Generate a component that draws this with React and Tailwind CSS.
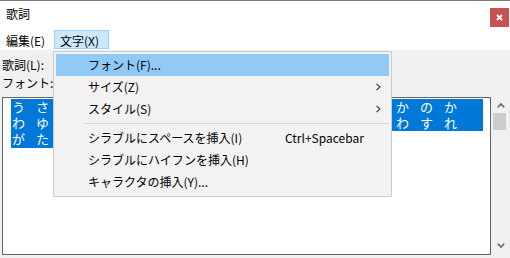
// Lyrics dialog with the 文字 menu open
// cells hidden under the open menu are left blank
const row1 = ['う', 'さ', '', '', '', '', '', '', '', '', '', '', '', '', '', '', 'か', 'の', 'か'];
const row2 = ['わ', 'ゆ', '', '', '', '', '', '', '', '', '', '', '', '', '', '', 'わ', 'す', 'れ'];
const row3 = ['が', 'た', '', '', '', '', ''];

const menuItems = [
  { label: 'フォント(F)...', active: true },
  { label: 'サイズ(Z)', sub: true },
  { label: 'スタイル(S)', sub: true },
  { sep: true },
  { label: 'シラブルにスペースを挿入(I)', shortcut: 'Ctrl+Spacebar' },
  { label: 'シラブルにハイフンを挿入(H)' },
  { label: 'キャラクタの挿入(Y)...' },
];

function LyricRow ({ chars, h, tail }) {
  return (
    <div className={`flex ${h}`}>
      <div className="flex bg-[#0078d7] text-white">
        {chars.map((c, i) => (
          <span key={i} className="w-[24px] pl-[1px] leading-[15px]">{c}</span>
        ))}
        {tail && <span className="w-[16px]" />}
      </div>
    </div>
  );
}

function Chevron () {
  return (
    <svg width="5" height="8" viewBox="0 0 5 8" className="ml-auto mr-[8px]">
      <polyline points="0.5,0.8 4,4 0.5,7.2" fill="none" stroke="#333" strokeWidth="1.1" />
    </svg>
  );
}

function Menu () {
  return (
    <div className="absolute left-[53px] top-[51px] w-[339px] h-[146px] border border-[#cccccc] bg-[#f2f2f2] p-[2px] text-[12px] text-black">
      {menuItems.map((item, i) =>
        item.sep ? (
          <div key={i} className="h-[7px] flex items-center pl-[28px]">
            <div className="h-px w-full bg-[#d7d7d7]" />
          </div>
        ) : (
          <div key={i} className={`flex items-center h-[22px] pl-[32px] ${item.active ? 'bg-[#91c9f7]' : ''}`}>
            <span className="w-[197px] shrink-0 leading-[22px]">{item.label}</span>
            {item.shortcut && <span className="leading-[22px]">{item.shortcut}</span>}
            {item.sub && <Chevron />}
          </div>
        )
      )}
    </div>
  );
}

export default function App () {
  return (
    <div className="relative w-[510px] h-[258px] overflow-hidden bg-[#f0f0f0] font-['Noto_Sans_CJK_JP',sans-serif] text-[12px] text-black">
      {/* title bar */}
      <div className="h-[30px] bg-white border-t border-[#7a7a7a] flex items-start justify-between">
        <span className="pl-[6px] pt-[5px] leading-[16px]">歌詞</span>
        <div className="mt-[7px] mr-[1px] w-[19px] h-[19px] bg-[#c75050] flex items-center justify-center">
          <svg width="7" height="7" viewBox="0 0 7 7">
            <path d="M1 1 L6 6 M6 1 L1 6" stroke="#fff" strokeWidth="1.8" />
          </svg>
        </div>
      </div>

      {/* menu bar */}
      <div className="h-[20px] bg-white flex">
        <span className="w-[54px] pl-[6px] leading-[22px]">編集(E)</span>
        <span className="w-[55px] h-[19px] border border-[#99d1ff] bg-[#cce8ff] pl-[5px] leading-[19px]">文字(X)</span>
      </div>

      {/* body */}
      <div className="pt-[6px]">
        <div className="h-[18px] pl-[2px] leading-[18px]">歌詞(L):</div>
        <div className="h-[18px] pl-[2px] leading-[18px]">フォント:</div>
        <div className="mt-[5px] flex">
          <div className="ml-[2px] w-[489px] h-[158px] border border-[#646464] bg-white pt-[1px] pl-[8px] text-[13px]">
            <LyricRow chars={row1} h="h-[16px]" tail />
            <LyricRow chars={row2} h="h-[16px]" tail />
            <LyricRow chars={row3} h="h-[17px]" />
          </div>
          <div className="w-[19px] h-[158px] flex flex-col">
            <div className="h-[16px] flex items-center justify-center">
              <svg width="8" height="5" viewBox="0 0 8 5">
                <polyline points="0.8,4.2 4,1 7.2,4.2" fill="none" stroke="#606060" strokeWidth="1.6" />
              </svg>
            </div>
            <div className="ml-[2px] w-[13px] h-[17px] bg-[#cdcdcd]" />
            <div className="flex-1" />
            <div className="h-[17px] flex items-center justify-center mb-[1px]">
              <svg width="8" height="5" viewBox="0 0 8 5">
                <polyline points="0.8,0.8 4,4 7.2,0.8" fill="none" stroke="#606060" strokeWidth="1.6" />
              </svg>
            </div>
          </div>
        </div>
      </div>

      <Menu />
    </div>
  );
}
